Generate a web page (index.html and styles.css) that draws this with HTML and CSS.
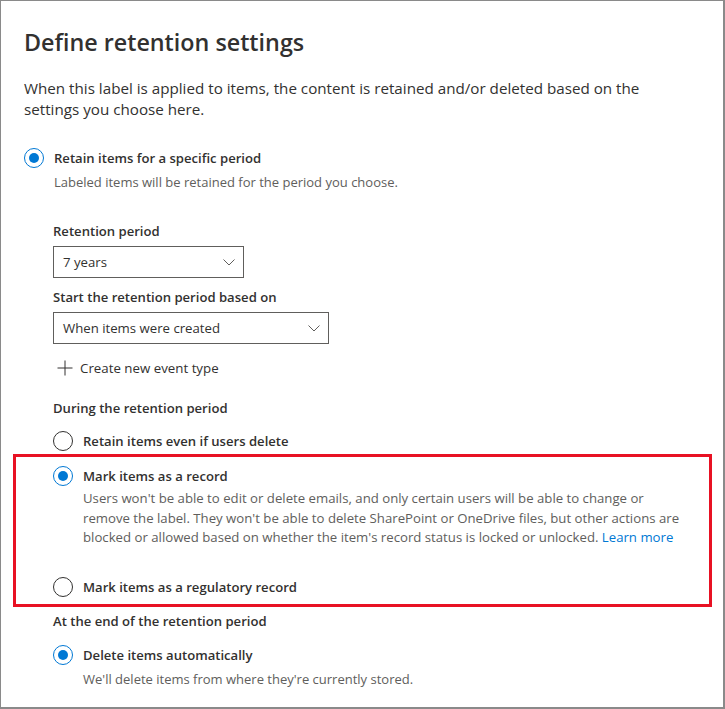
FILE: index.html
```html
<!DOCTYPE html>
<html lang="en">
<head>
<meta charset="utf-8">
<title>Define retention settings</title>
<link rel="stylesheet" href="styles.css">
</head>
<body>
<div class="frame">
  <h1 class="title">Define retention settings</h1>
  <p class="intro">When this label is applied to items, the content is retained and/or deleted based on the settings you choose here.</p>

  <div class="radio-row top-radio">
    <span class="radio checked"></span>
    <span class="radio-label">Retain items for a specific period</span>
  </div>
  <p class="sub sub-top">Labeled items will be retained for the period you choose.</p>

  <div class="section">
    <div class="field-label fl-first">Retention period</div>
    <div class="dropdown dd-short">
      <span>7 years</span>
      <svg class="chev" width="12" height="7" viewBox="0 0 12 7"><path d="M0.5 0.5 L6 6 L11.5 0.5" fill="none" stroke="#605e5c" stroke-width="1"/></svg>
    </div>
    <div class="field-label fl-second">Start the retention period based on</div>
    <div class="dropdown dd-long">
      <span>When items were created</span>
      <svg class="chev" width="12" height="7" viewBox="0 0 12 7"><path d="M0.5 0.5 L6 6 L11.5 0.5" fill="none" stroke="#605e5c" stroke-width="1"/></svg>
    </div>
    <div class="create-row">
      <svg class="plus" width="16" height="16" viewBox="0 0 16 16"><path d="M8 0.5 V15.5 M0.5 8 H15.5" fill="none" stroke="#323130" stroke-width="1"/></svg>
      <span>Create new event type</span>
    </div>

    <div class="field-label fl-during">During the retention period</div>
    <div class="radio-row r-retain">
      <span class="radio"></span>
      <span class="radio-label">Retain items even if users delete</span>
    </div>
    <div class="radio-row r-record">
      <span class="radio checked"></span>
      <span class="radio-label">Mark items as a record</span>
    </div>
    <p class="sub sub-record">Users won't be able to edit or delete emails, and only certain users will be able to change or remove the label. They won't be able to delete SharePoint or OneDrive files, but other actions are blocked or allowed based on whether the item's record status is locked or unlocked. <a class="link" href="#">Learn more</a></p>
    <div class="radio-row r-reg">
      <span class="radio"></span>
      <span class="radio-label">Mark items as a regulatory record</span>
    </div>

    <div class="field-label fl-end">At the end of the retention period</div>
    <div class="radio-row r-delete">
      <span class="radio checked"></span>
      <span class="radio-label">Delete items automatically</span>
    </div>
    <p class="sub sub-delete">We'll delete items from where they're currently stored.</p>
  </div>

  <div class="highlight"></div>
</div>
</body>
</html>
```

FILE: styles.css
```css
* { box-sizing: border-box; }
html, body { margin: 0; padding: 0; background: #ffffff; }
body {
  font-family: "Open Sans", "Noto Sans", "Liberation Sans", sans-serif;
  color: #323130;
}
.frame {
  position: relative;
  width: 725px;
  height: 709px;
  border: 2px solid #8a8a8a;
  border-top-width: 1px;
  border-left-width: 1px;
  padding: 25px 0 0 23px;
  overflow: hidden;
}
.title {
  margin: 0;
  font-size: 23.3px;
  line-height: 32px;
  font-weight: 600;
  color: #323130;
}
.intro {
  margin: 20px 0 0;
  font-size: 15.2px;
  line-height: 21px;
  width: 660px;
}
.radio-row {
  display: flex;
  align-items: center;
  height: 20px;
}
.radio {
  width: 20px;
  height: 20px;
  border-radius: 50%;
  border: 1px solid #323130;
  flex: none;
  display: flex;
  align-items: center;
  justify-content: center;
}
.radio.checked { border-color: #0078d4; }
.radio.checked::after {
  content: "";
  width: 10px;
  height: 10px;
  border-radius: 50%;
  background: #0078d4;
}
.radio-label {
  margin-left: 10px;
  font-size: 13.1px;
  font-weight: 600;
  line-height: 20px;
}
.top-radio { margin-top: 28px; }
.sub {
  margin: 0;
  font-size: 13px;
  color: #605e5c;
  line-height: 18px;
}
.sub-top { margin: 5px 0 0 30px; }
.section { padding-left: 29px; }
.field-label {
  font-size: 13.1px;
  font-weight: 600;
  line-height: 20px;
}
.fl-first { margin-top: 30px; }
.fl-second { margin-top: 9px; }
.fl-during { margin-top: 20px; }
.fl-end { margin-top: 14px; }
.dropdown {
  margin-top: 5px;
  height: 32px;
  border: 1px solid #605e5c;
  display: flex;
  align-items: center;
  justify-content: space-between;
  padding: 0 8px 0 9px;
  font-size: 13.2px;
}
.dd-short { width: 191px; }
.dd-long { width: 276px; }
.chev { display: block; }
.create-row {
  margin-top: 14px;
  height: 20px;
  display: flex;
  align-items: center;
  padding-left: 4px;
  font-size: 13.3px;
}
.plus { display: block; margin-right: 7px; }
.r-retain { margin-top: 13px; }
.r-record { margin-top: 15px; }
.sub-record {
  margin: 3px 0 0 30px;
  font-size: 13.2px;
  line-height: 19.6px;
  width: 610px;
}
.link { color: #0078d4; text-decoration: none; }
.r-reg { margin-top: 29px; }
.r-delete { margin-top: 14px; }
.sub-delete { margin: 5px 0 0 30px; }
.highlight {
  position: absolute;
  left: 12px;
  top: 453px;
  width: 699px;
  height: 153px;
  border: 3px solid #e81123;
  pointer-events: none;
}
```
